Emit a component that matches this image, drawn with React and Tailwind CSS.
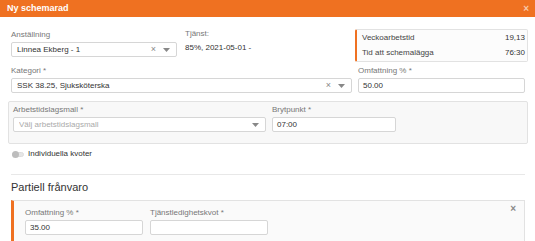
function Caret() {
  return (
    <svg width="7" height="4" viewBox="0 0 7 4" className="shrink-0">
      <path d="M0 0h7L3.5 4z" fill="#888" />
    </svg>
  );
}

function Select({ value, placeholder, clear, className }) {
  return (
    <div
      className={`h-[15px] flex items-center border border-[#d6d6d6] rounded-[2px] bg-white pl-[5px] pr-[6px] ${className}`}
    >
      <span className={`flex-1 truncate ${value ? "text-[#333]" : "text-[#aaa]"}`}>
        {value || placeholder}
      </span>
      {clear && <span className="text-[#888] text-[9px] leading-none mr-[7px]">×</span>}
      <Caret />
    </div>
  );
}

function Input({ value, className }) {
  return (
    <div
      className={`h-[15px] flex items-center border border-[#d6d6d6] rounded-[2px] bg-white px-[4px] text-[#333] ${className}`}
    >
      {value}
    </div>
  );
}

function Label({ children }) {
  return <div className="h-[10px] leading-[10px] text-[#777] mb-[2px]">{children}</div>;
}

export default function App() {
  return (
    <div
      className="w-[535px] h-[241px] overflow-hidden bg-white text-[8px]"
      style={{ fontFamily: '"Liberation Sans", Arial, sans-serif' }}
    >
      {/* Header */}
      <div className="h-[17px] bg-[#ef7121] flex items-center justify-between pl-[7px] pr-[6px]">
        <span className="text-white font-bold text-[9px]">Ny schemarad</span>
        <span className="text-[#f8c7a8] text-[10px] font-bold leading-none">×</span>
      </div>

      <div className="pl-[11px] pr-[7px]">
        {/* Row 1 */}
        <div className="flex mt-[12px]">
          <div className="w-[166px] pt-[1px]">
            <Label>Anställning</Label>
            <Select value="Linnea Ekberg - 1" clear />
          </div>
          <div className="ml-[8px] text-[#333]">
            <div className="h-[10px] leading-[10px] text-[#777]">Tjänst:</div>
            <div className="mt-[3px]">85%, 2021-05-01 -</div>
          </div>
          <div className="ml-auto w-[173px] h-[33px] border border-[#e2e2e2] border-l-[2px] border-l-[#ef7121] rounded-[2px] bg-[#fcfcfc] pl-[5px] pr-[2px] flex flex-col justify-center gap-[3px] text-[#444]">
            <div className="flex justify-between">
              <span>Veckoarbetstid</span>
              <span className="text-[#333]">19,13</span>
            </div>
            <div className="flex justify-between">
              <span>Tid att schemalägga</span>
              <span className="text-[#333]">76:30</span>
            </div>
          </div>
        </div>

        {/* Row 2 */}
        <div className="flex mt-[4px]">
          <div className="w-[341px]">
            <Label>Kategori *</Label>
            <Select value="SSK 38.25, Sjuksköterska" clear />
          </div>
          <div className="ml-[6px] w-[167px]">
            <Label>Omfattning % *</Label>
            <Input value="50.00" />
          </div>
        </div>

        {/* Fieldset */}
        <div className="-ml-[3px] mt-[8px] h-[43px] border border-[#e2e2e2] rounded-[2px] bg-[#f8f8f8] pl-[4px] pt-[3px] flex">
          <div className="w-[253px]">
            <Label>Arbetstidslagsmall *</Label>
            <Select placeholder="Välj arbetstidslagsmall" />
          </div>
          <div className="ml-[6px] w-[124px]">
            <Label>Brytpunkt *</Label>
            <Input value="07:00" />
          </div>
        </div>

        {/* Toggle */}
        <div className="flex items-center mt-[4px] ml-[1px] text-[#333]">
          <div className="relative w-[12px] h-[5px] rounded-full bg-[#e6e6e6] border border-[#ddd]">
            <div className="absolute -left-[1px] -top-[2px] w-[7px] h-[7px] rounded-full bg-[#bdbdbd]" />
          </div>
          <span className="ml-[4px]">Individuella kvoter</span>
        </div>

        {/* Divider */}
        <div className="mt-[14px] mr-[3px] h-px bg-[#e8e8e8]" />

        <div className="mt-[6px] text-[11px] leading-[12px] text-[#333]">Partiell frånvaro</div>

        {/* Panel */}
        <div className="relative mt-[7px] mr-[3px] h-[50px] border border-[#e2e2e2] border-l-[3px] border-l-[#ef7121] bg-[#fafafa] pl-[11px] pt-[7px] flex">
          <div className="w-[118px]">
            <Label>Omfattning % *</Label>
            <Input value="35.00" />
          </div>
          <div className="ml-[7px] w-[118px]">
            <Label>Tjänstledighetskvot *</Label>
            <Input value="" />
          </div>
          <span className="absolute right-[8px] top-[3px] text-[#888] text-[10px] font-bold leading-none">×</span>
        </div>
      </div>
    </div>
  );
}
